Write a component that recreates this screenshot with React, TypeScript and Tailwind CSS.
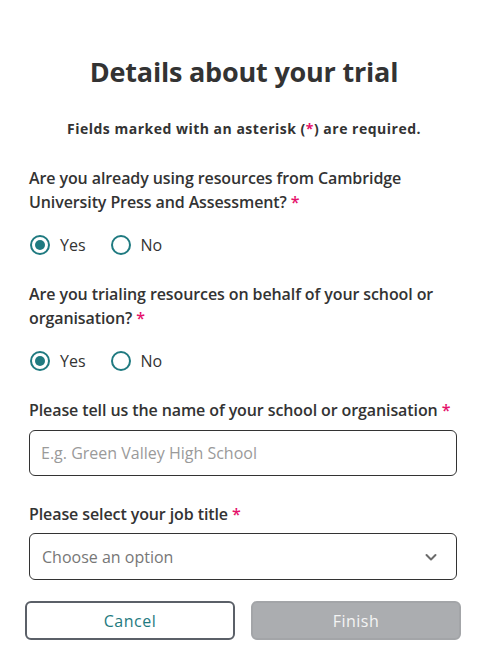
import React from "react";

const Star = () => <span className="text-[#e5126b]">*</span>;

function Radio({ checked, label }: { checked: boolean; label: string }) {
  return (
    <label className="flex items-center gap-[10px]">
      <span className="w-5 h-5 rounded-full border-2 border-[#1f7a80] flex items-center justify-center">
        {checked && <span className="w-[10px] h-[10px] rounded-full bg-[#1f7a80]" />}
      </span>
      <span className="text-[16px] leading-[24px] text-[#333]">{label}</span>
    </label>
  );
}

function Label({ children, className }: { children: React.ReactNode; className: string }) {
  return (
    <p className={"text-[16px] font-semibold leading-[24px] tracking-[-0.1px] " + className}>{children}</p>
  );
}

export default function App() {
  return (
    <div
      className="w-[488px] h-[669px] bg-white text-[#333] flex flex-col"
      style={{ fontFamily: "'Open Sans', sans-serif" }}
    >
      <h1 className="text-[27px] font-bold text-center mt-[52px] leading-[40px] tracking-[-0.2px]">
        Details about your trial
      </h1>
      <p className="text-[14px] font-bold text-center mt-[27px] leading-[20px] tracking-[0.5px]">
        Fields marked with an asterisk (<Star />) are required.
      </p>
      <div className="pl-[29px] pr-[31px] flex flex-col">
        <Label className="mt-[27px]">
          Are you already using resources from Cambridge University Press and Assessment? <Star />
        </Label>
        <div className="flex gap-[25px] mt-[19px] pl-[1px]">
          <Radio checked label="Yes" />
          <Radio checked={false} label="No" />
        </div>
        <Label className="mt-[25px]">
          Are you trialing resources on behalf of your school or organisation? <Star />
        </Label>
        <div className="flex gap-[25px] mt-[19px] pl-[1px]">
          <Radio checked label="Yes" />
          <Radio checked={false} label="No" />
        </div>
        <Label className="mt-[25px]">
          Please tell us the name of your school or organisation <Star />
        </Label>
        <input
          className="mt-[8px] h-[46px] w-full rounded-[6px] border border-[#333] px-[11px] text-[16px] placeholder:text-[#9a9a9a] outline-none"
          placeholder="E.g. Green Valley High School"
        />
        <Label className="mt-[26px]">
          Please select your job title <Star />
        </Label>
        <div className="mt-[7px] h-[47px] w-full rounded-[6px] border border-[#333] px-[12px] flex items-center justify-between">
          <span className="text-[16px] text-[#777]">Choose an option</span>
          <svg width="14" height="14" viewBox="0 0 14 14" className="mr-[6px]">
            <path d="M2.5 5 L7 9.5 L11.5 5" fill="none" stroke="#6b6b6b" strokeWidth="2" strokeLinecap="round" strokeLinejoin="round" />
          </svg>
        </div>
      </div>
      <div className="pl-[25px] pr-[27px] mt-[21px] flex gap-4">
        <button className="flex-1 h-[39px] rounded-[6px] border-2 border-[#5b6068] text-[#1f7a80] text-[16px] tracking-[0.5px] bg-white">
          Cancel
        </button>
        <button className="flex-1 h-[39px] rounded-[6px] border-2 border-[#a3a5a8] bg-[#abadb0] text-[#f4f4f4] text-[16px] tracking-[0.5px]">
          Finish
        </button>
      </div>
    </div>
  );
}
